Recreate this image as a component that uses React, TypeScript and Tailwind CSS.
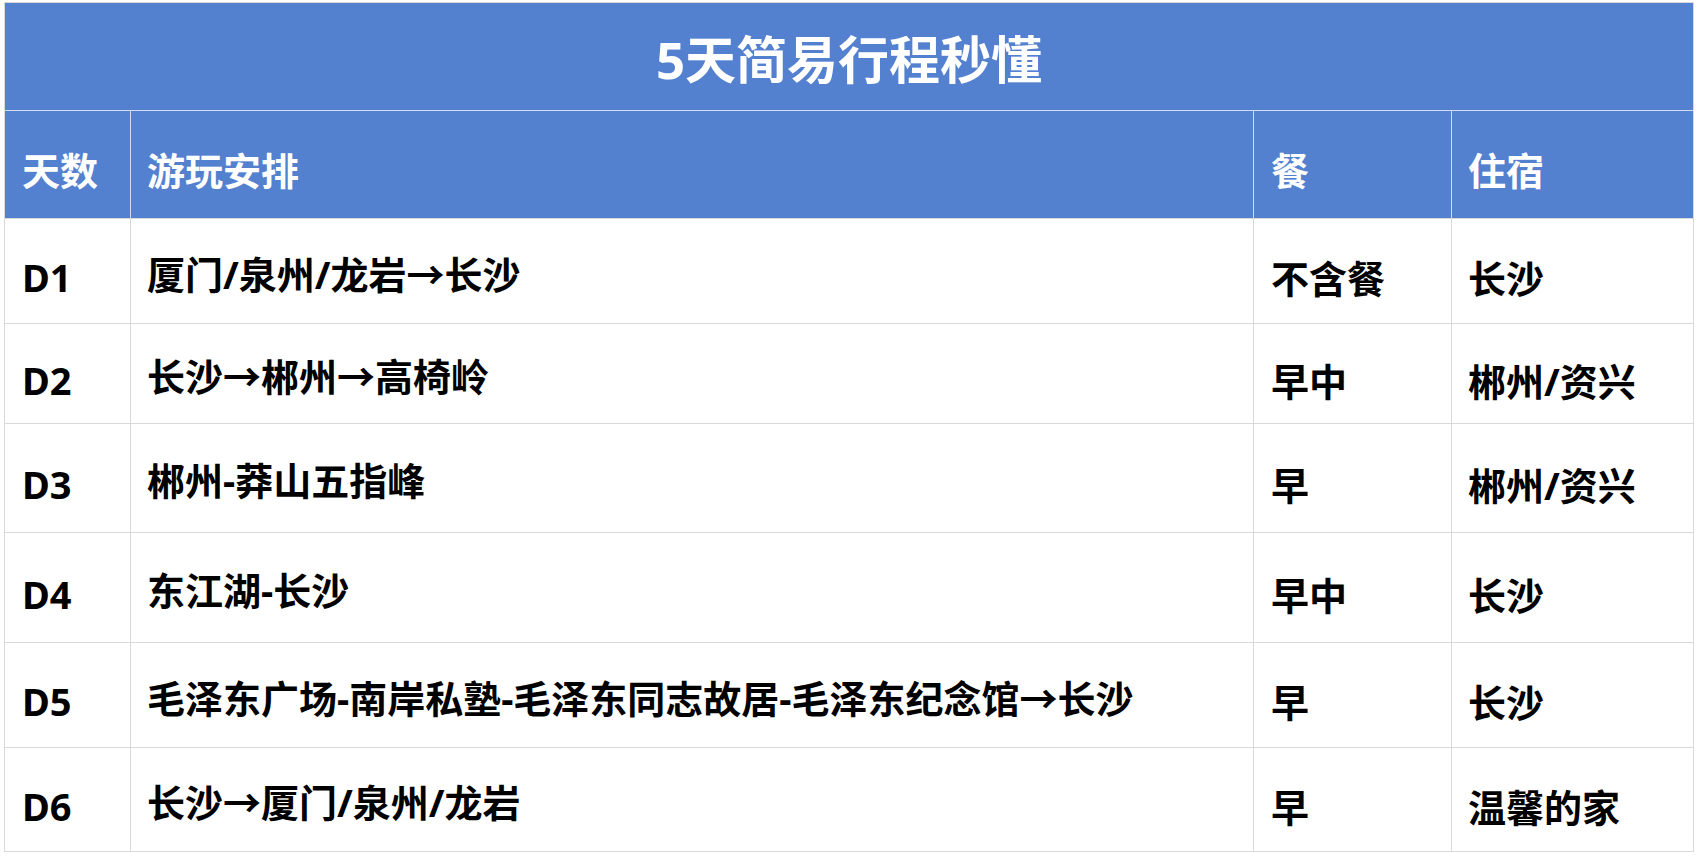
import React from "react";

const rows: { d: string; plan: string; meal: string; stay: string; h: string }[] = [
  { d: "D1", plan: "厦门/泉州/龙岩→长沙", meal: "不含餐", stay: "长沙", h: "h-[105px]" },
  { d: "D2", plan: "长沙→郴州→高椅岭", meal: "早中", stay: "郴州/资兴", h: "h-[100px]" },
  { d: "D3", plan: "郴州-莽山五指峰", meal: "早", stay: "郴州/资兴", h: "h-[109px]" },
  { d: "D4", plan: "东江湖-长沙", meal: "早中", stay: "长沙", h: "h-[110px]" },
  { d: "D5", plan: "毛泽东广场-南岸私塾-毛泽东同志故居-毛泽东纪念馆→长沙", meal: "早", stay: "长沙", h: "h-[105px]" },
  { d: "D6", plan: "长沙→厦门/泉州/龙岩", meal: "早", stay: "温馨的家", h: "h-[104px]" },
];

const font = { fontFamily: '"Noto Sans", "Noto Sans CJK SC", sans-serif' };

function Plan({ text }: { text: string }) {
  const parts = text.split("→");
  return (
    <>
      {parts.map((p, i) => (
        <React.Fragment key={i}>
          {i > 0 && <span className="[font-family:'Noto_Sans_CJK_SC',sans-serif]">→</span>}
          {p}
        </React.Fragment>
      ))}
    </>
  );
}

export default function App() {
  return (
    <div className="w-[1700px] h-[859px] bg-white pt-[2px] pl-[4px]" style={font}>
      <div className="w-[1690px] border border-[#d9d9d9] bg-white">
        <div className="h-[107px] bg-[#5480d0] flex items-center justify-center pt-[6px]">
          <span className="text-white font-bold text-[51px] leading-none">5天简易行程秒懂</span>
        </div>
        <div className="h-[108px] grid grid-cols-[125px_1123px_198px_242px] bg-[#5480d0] border-t border-[#d3dcee]">
          <div className="flex items-center pl-[17px] pt-[10px] text-white font-bold text-[38px] leading-none">天数</div>
          <div className="flex items-center pl-[16px] pt-[10px] text-white font-bold text-[38px] leading-none border-l border-[#d3dcee]">游玩安排</div>
          <div className="flex items-center pl-[17px] pt-[10px] text-white font-bold text-[38px] leading-none border-l border-[#d3dcee]">餐</div>
          <div className="flex items-center pl-[16px] pt-[10px] text-white font-bold text-[38px] leading-none border-l border-[#d3dcee]">住宿</div>
        </div>
        {rows.map((r) => (
          <div key={r.d} className={`${r.h} grid grid-cols-[125px_1123px_198px_242px] border-t border-[#d9d9d9]`}>
            <div className="flex items-center pl-[17px] pt-[12px] text-black font-bold text-[38px] leading-none">{r.d}</div>
            <div className="flex items-center pl-[16px] pt-[4px] text-black font-bold text-[38px] leading-none border-l border-[#d9d9d9] whitespace-nowrap">
              <span><Plan text={r.plan} /></span>
            </div>
            <div className="flex items-center pl-[17px] pt-[14px] text-black font-bold text-[38px] leading-none border-l border-[#d9d9d9]">{r.meal}</div>
            <div className="flex items-center pl-[16px] pt-[14px] text-black font-bold text-[38px] leading-none border-l border-[#d9d9d9]">{r.stay}</div>
          </div>
        ))}
      </div>
    </div>
  );
}
